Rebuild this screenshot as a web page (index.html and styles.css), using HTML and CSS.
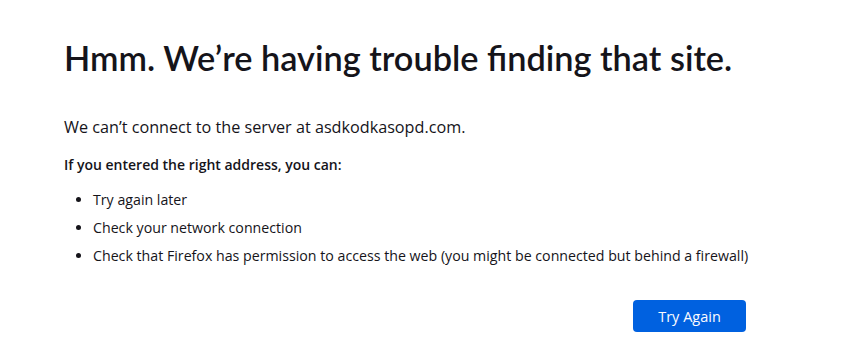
FILE: index.html
```html
<!DOCTYPE html>
<html lang="en">
<head>
<meta charset="utf-8">
<title>Problem loading page</title>
<link rel="stylesheet" href="styles.css">
</head>
<body>
<main class="container">
  <h1 class="title">Hmm. We’re having trouble finding that site.</h1>
  <p class="intro">We can’t connect to the server at asdkodkasopd.com.</p>
  <p class="lead">If you entered the right address, you can:</p>
  <ul class="tips">
    <li>Try again later</li>
    <li>Check your network connection</li>
    <li>Check that Firefox has permission to access the web (you might be connected but behind a firewall)</li>
  </ul>
  <div class="actions">
    <button class="btn-primary" type="button">Try Again</button>
  </div>
</main>
</body>
</html>
```
FILE: styles.css
```css
html, body {
  margin: 0;
  padding: 0;
  background: #ffffff;
}
body {
  font-family: "Open Sans", "Noto Sans", sans-serif;
  color: #15141a;
}
.container {
  width: 720px;
  padding: 34px 0 0 64px;
  display: flex;
  flex-direction: column;
}
.title {
  margin: 0;
  font-family: "Lato", "Open Sans", sans-serif;
  font-size: 34.3px;
  line-height: 48px;
  font-weight: 600;
  white-space: nowrap;
}
.intro {
  margin: 33px 0 0;
  font-size: 16.2px;
  line-height: 24px;
}
.lead {
  margin: 15px 0 0;
  font-size: 14px;
  line-height: 22px;
  font-weight: 600;
}
.tips {
  margin: 14px 0 0;
  padding-left: 29px;
  font-size: 14.2px;
  line-height: 20px;
}
.tips li {
  margin-bottom: 8px;
}
.actions {
  display: flex;
  justify-content: flex-end;
  margin-top: 26px;
  padding-right: 38px;
}
.btn-primary {
  width: 113px;
  height: 32px;
  border: 0;
  border-radius: 4px;
  background: #0061e0;
  color: #fbfbfe;
  font-family: inherit;
  font-size: 14.5px;
  font-weight: 500;
  cursor: pointer;
}
```
